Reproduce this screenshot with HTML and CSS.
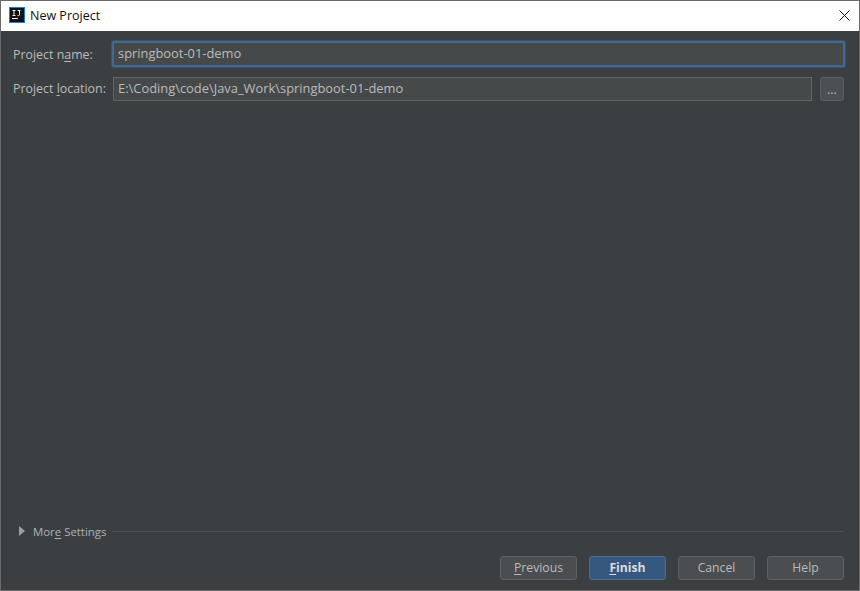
FILE: index.html
```html
<!DOCTYPE html>
<html lang="en">
<head>
<meta charset="utf-8">
<title>New Project</title>
<link rel="stylesheet" href="styles.css">
</head>
<body>
<div class="window">
  <header class="titlebar">
    <svg class="logo" width="16" height="16" viewBox="0 0 16 16">
      <rect x="0.5" y="0.5" width="15" height="15" fill="#111" stroke="#1a7fe0"/>
      <rect x="3" y="11" width="6" height="1" fill="#eee"/>
      <path d="M3.5 3.5h3M5 3.5v5M3.5 8.5h3M8.5 3.5h3M10.5 3.5v4.3q0 .8-.8.8H8.5" fill="none" stroke="#eee" stroke-width="1"/>
    </svg>
    <span class="title">New Project</span>
    <svg class="close" width="11" height="11" viewBox="0 0 11 11">
      <path d="M.5.5l10 10M10.5.5l-10 10" stroke="#111" stroke-width="1" fill="none"/>
    </svg>
  </header>
  <main class="content">
    <div class="form">
      <div class="row">
        <label class="label">Project n<u>a</u>me:</label>
        <div class="input focused">springboot-01-demo</div>
      </div>
      <div class="row">
        <label class="label label-raised">Project <u>l</u>ocation:</label>
        <div class="input">E:\Coding\code\Java_Work\springboot-01-demo</div>
        <button class="browse">...</button>
      </div>
    </div>
    <div class="more">
      <svg class="arrow" width="6" height="10" viewBox="0 0 6 10"><path d="M0 0l6 5-6 5z" fill="#9a9ea1"/></svg>
      <span class="more-label">Mor<u>e</u> Settings</span>
      <span class="rule"></span>
    </div>
    <footer class="buttons">
      <button class="btn"><u>P</u>revious</button>
      <button class="btn primary"><u>F</u>inish</button>
      <button class="btn">Cancel</button>
      <button class="btn">Help</button>
    </footer>
  </main>
</div>
</body>
</html>
```
FILE: styles.css
```css
* { box-sizing: border-box; }
html, body { margin: 0; padding: 0; }
body { width: 860px; height: 591px; overflow: hidden; font-family: "Open Sans", "Noto Sans", sans-serif; font-size: 12.4px; }
.window { width: 860px; height: 591px; border: 1px solid #6a6a6a; display: flex; flex-direction: column; background: #3c3f41; }
.titlebar { height: 30px; background: #fff; display: flex; align-items: center; padding: 0 9px 2px 8px; color: #111; font-size: 12.5px; flex: none; }
.logo { display: block; margin-right: 5px; }
.title { flex: 1; }
.close { display: block; }
.content { flex: 1; display: flex; flex-direction: column; padding: 10px 15px 10px 12px; color: #bbb; }
.form { display: flex; flex-direction: column; gap: 10px; flex: 1; }
.row { display: flex; align-items: center; height: 26px; }
.row:last-child { height: 24px; }
.label { width: 100px; flex: none; color: #bbb; white-space: nowrap; }
.label-raised { padding-bottom: 1px; }
.input { flex: 1; height: 24px; background: #45494a; border: 1px solid #646464; padding: 0 4px; line-height: 21px; color: #bbb; white-space: nowrap; font-size: 12.9px; }
.input.focused { height: 26px; border: 2px solid #3f6a94; box-shadow: 0 0 0 1px rgba(63, 106, 148, 0.45); border-radius: 2px; padding: 0 4px; line-height: 21px; margin-left: -1px; margin-right: -1px; }
.browse { width: 24px; height: 24px; margin-left: 8px; background: #4c5052; border: 1px solid #5e6060; border-radius: 3px; color: #bbb; font: inherit; padding: 0; line-height: 24px; }
.more { display: flex; align-items: center; height: 14px; margin-bottom: 18px; margin-left: 6px; }
.arrow { display: block; margin-right: 8px; }
.more-label { color: #aab4bb; white-space: nowrap; font-size: 11.4px; }
.rule { flex: 1; height: 1px; background: #515151; margin-left: 6px; }
.buttons { display: flex; justify-content: flex-end; gap: 12px; }
.btn { width: 77px; height: 24px; background: #4a4e50; border: 1px solid #5e6060; border-radius: 3px; color: #bbb; font: inherit; font-size: 12.2px; padding: 0 0 2px; }
.btn.primary { background: #365880; border-color: #4c708c; color: #ddd; font-weight: 700; }
u { text-underline-offset: 2px; }
```
